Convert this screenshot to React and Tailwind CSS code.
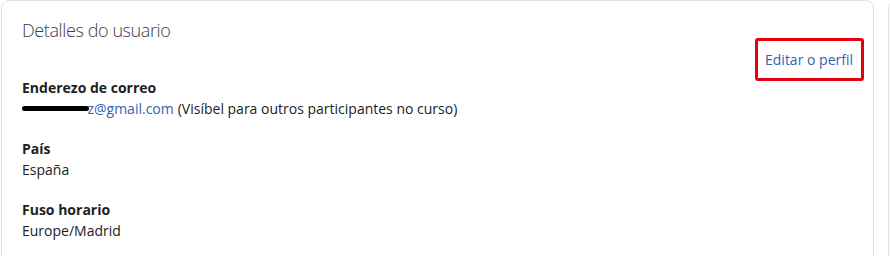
export default function App() {
  const fields = [
    { label: "País", value: "España" },
    { label: "Fuso horario", value: "Europe/Madrid" },
  ];
  return (
    <div
      className="flex h-[256px] w-[890px] gap-[14px] overflow-hidden bg-white pl-px text-[#1d2125]"
      style={{ fontFamily: '"Open Sans", "Noto Sans", sans-serif' }}
    >
      <section className="h-[300px] w-[873px] shrink-0 rounded-t-lg border border-[#dee2e6] px-5 pt-[14px]">
        <h3 className="text-[18px] font-light leading-[30px] tracking-[-0.4px] text-[#3d4045]">
          Detalles do usuario
        </h3>
        <div className="mt-[4px] flex justify-end">
          <a href="#" className="relative text-[14px] leading-[21px] text-[#3362b0]">
            Editar o perfil
            <span className="absolute -left-[10px] -right-[11px] -inset-y-[11px] rounded-[3px] border-[3px] border-[#e3000f]"></span>
          </a>
        </div>
        <dl className="mt-[7px] text-[14px] leading-[21px]">
          <dt className="font-bold">Enderezo de correo</dt>
          <dd className="mb-[19px] flex items-center">
            <span className="relative inline-block h-[21px] w-[72px]">
              <span className="absolute left-0 top-[8px] h-[5px] w-[67px] rounded-full bg-black"></span>
              <span className="absolute right-0 top-0 text-[#3362b0]">z</span>
            </span>
            <a href="#" className="text-[#3362b0]">@gmail.com</a>
            <span className="ml-1">(Visíbel para outros participantes no curso)</span>
          </dd>
          {fields.map((f) => (
            <div key={f.label}>
              <dt className="font-bold">{f.label}</dt>
              <dd className="mb-[19px]">{f.value}</dd>
            </div>
          ))}
        </dl>
      </section>
      <div className="h-[300px] w-[10px] shrink-0 rounded-tl-lg border-l border-t border-[#dee2e6]"></div>
    </div>
  );
}
